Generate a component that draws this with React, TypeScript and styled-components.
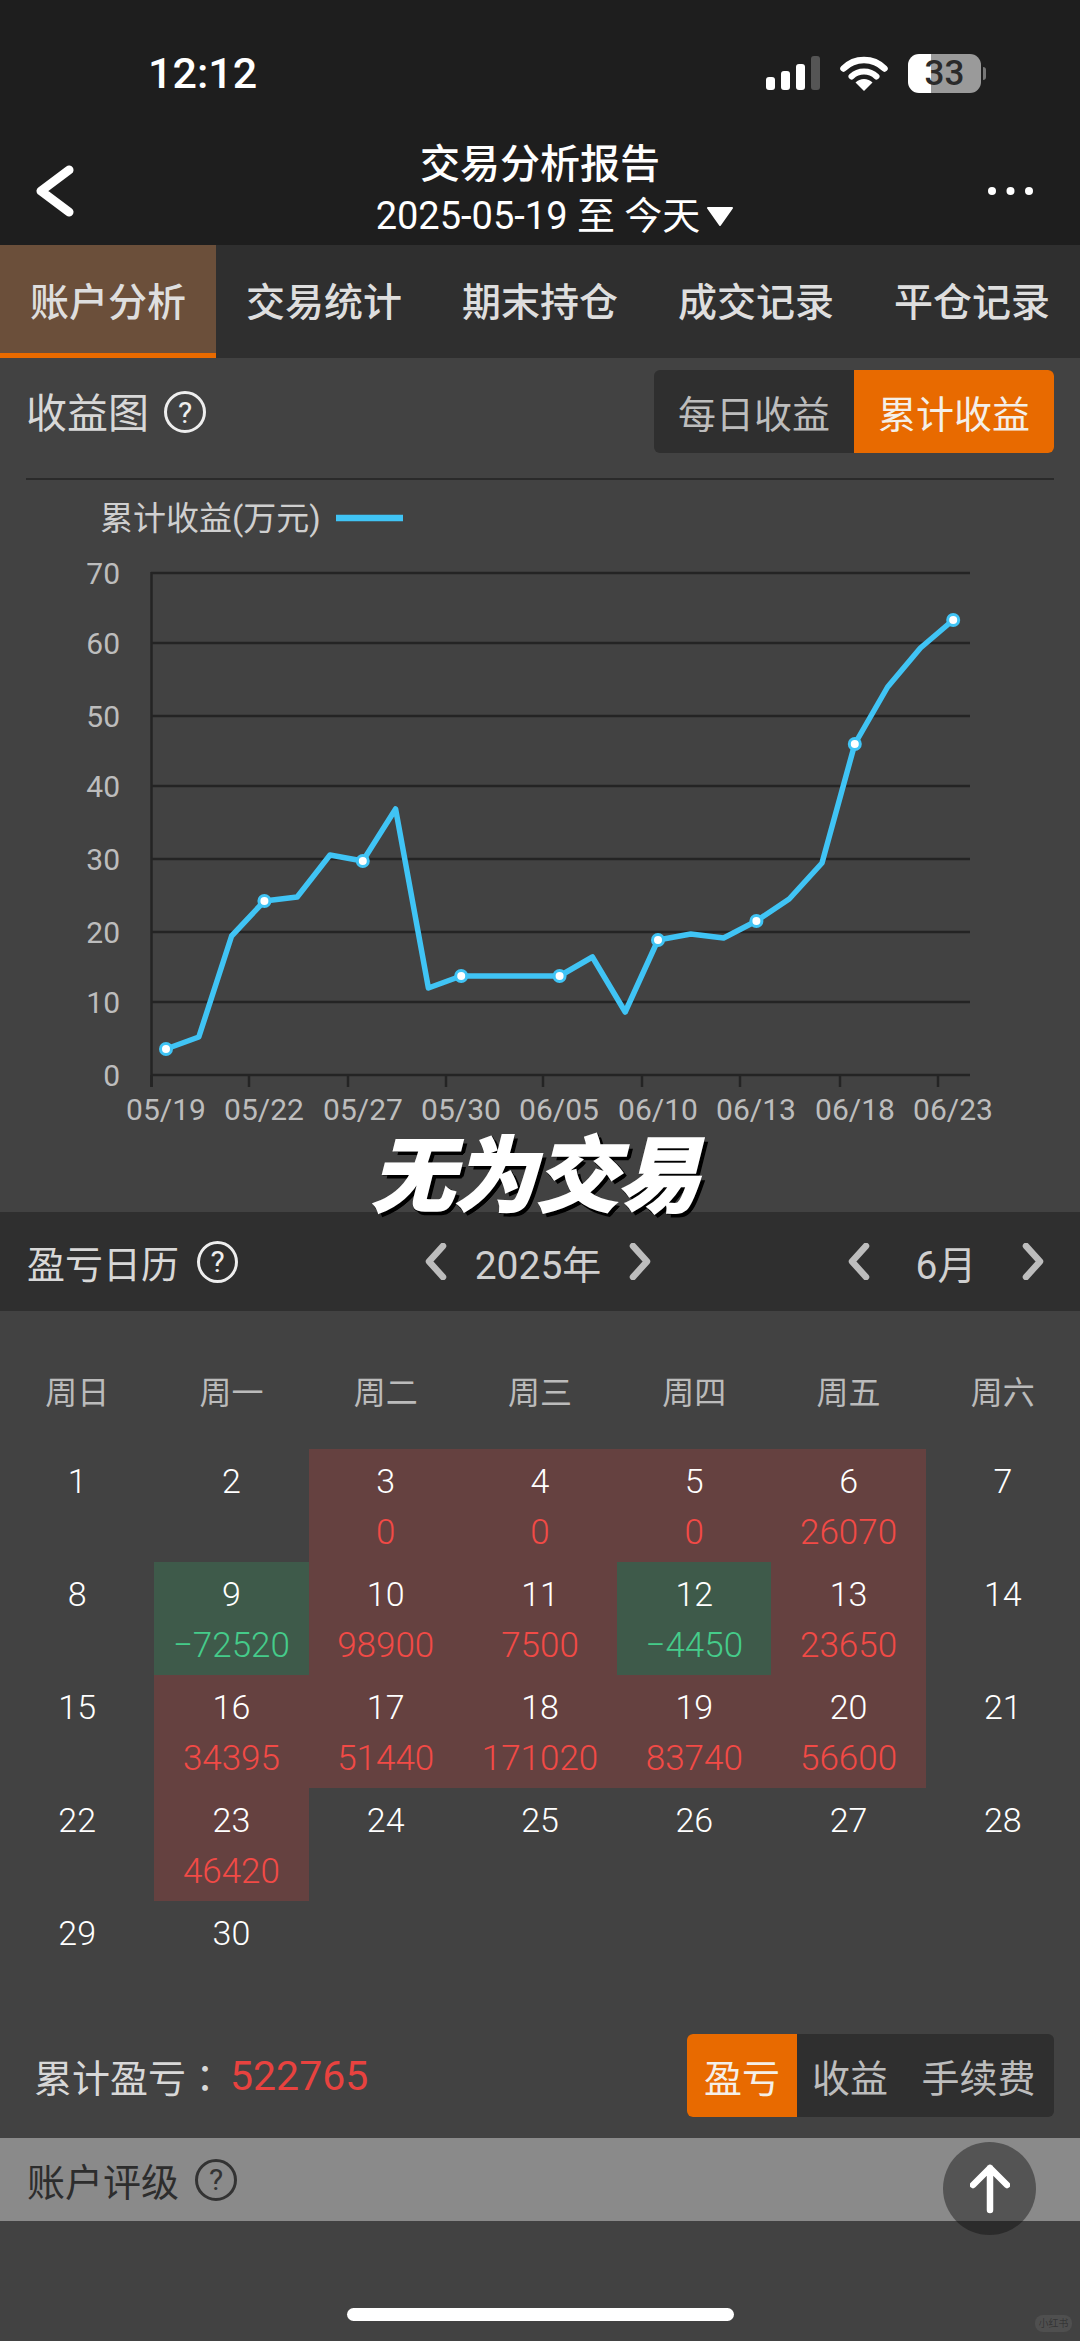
import React from "react";
import styled, { createGlobalStyle } from "styled-components";

const FONT = `Roboto, "Noto Sans CJK SC", sans-serif`;

const GlobalStyle = createGlobalStyle`
  html, body {
    margin: 0;
    padding: 0;
    background: #424242;
  }
  * {
    box-sizing: border-box;
  }
`;

const TABS = ["账户分析", "交易统计", "期末持仓", "成交记录", "平仓记录"];
const WEEKDAYS = ["周日", "周一", "周二", "周三", "周四", "周五", "周六"];

const VALUES: Record<number, number> = {
  3: 0,
  4: 0,
  5: 0,
  6: 26070,
  9: -72520,
  10: 98900,
  11: 7500,
  12: -4450,
  13: 23650,
  16: 34395,
  17: 51440,
  18: 171020,
  19: 83740,
  20: 56600,
  23: 46420,
};

const GRID_LINES = [
  { label: "70", y: 573 },
  { label: "60", y: 643 },
  { label: "50", y: 716 },
  { label: "40", y: 786 },
  { label: "30", y: 859 },
  { label: "20", y: 932 },
  { label: "10", y: 1002 },
  { label: "0", y: 1075 },
];
const X_TICKS = [151.5, 249, 348, 446, 543, 642, 740, 840, 938];
const X_LABELS = [
  { label: "05/19", x: 166 },
  { label: "05/22", x: 264 },
  { label: "05/27", x: 363 },
  { label: "05/30", x: 461 },
  { label: "06/05", x: 559 },
  { label: "06/10", x: 658 },
  { label: "06/13", x: 756 },
  { label: "06/18", x: 855 },
  { label: "06/23", x: 953 },
];
const SERIES = [
  1049, 1037, 936, 901, 897, 855, 861, 809, 988, 976, 976, 976, 976, 957, 1012,
  940, 934, 938, 921, 899, 863, 744, 687, 648, 620,
];
const POINTS = SERIES.map((y, i) => ({ x: 166 + i * 32.8, y }));

function Chart() {
  return (
    <ChartSvg viewBox="0 480 1080 732">
      <ChartText x={100} y={518} $size={33} $fill="#cfcfcf" dominantBaseline="central">
        累计收益(万元)
      </ChartText>
      <line x1={336} x2={403} y1={518} y2={518} stroke="#40c4f5" strokeWidth={6.5} />
      {GRID_LINES.map((g) => (
        <React.Fragment key={g.label}>
          <line x1={151} x2={970} y1={g.y} y2={g.y} stroke="#242424" strokeWidth={2.5} />
          <ChartText x={120} y={g.y} textAnchor="end" dominantBaseline="central">
            {g.label}
          </ChartText>
        </React.Fragment>
      ))}
      <line x1={151.5} x2={151.5} y1={572} y2={1087} stroke="#242424" strokeWidth={2.5} />
      {X_TICKS.map((x) => (
        <line key={x} x1={x} x2={x} y1={1075} y2={1087} stroke="#242424" strokeWidth={2.5} />
      ))}
      {X_LABELS.map((t) => (
        <ChartText key={t.label} x={t.x} y={1109} textAnchor="middle" dominantBaseline="central">
          {t.label}
        </ChartText>
      ))}
      <polyline
        points={POINTS.map((p) => `${p.x},${p.y}`).join(" ")}
        fill="none"
        stroke="#40c4f5"
        strokeWidth={5.5}
        strokeLinejoin="round"
      />
      {POINTS.filter((_, i) => i % 3 === 0).map((p) => (
        <circle key={p.x} cx={p.x} cy={p.y} r={5.5} fill="#fff" stroke="#40c4f5" strokeWidth={3} />
      ))}
    </ChartSvg>
  );
}

function Chevron({ right }: { right?: boolean }) {
  return (
    <svg width="24" height="37" viewBox="0 0 24 37">
      <path
        d={right ? "M5 3 L19 18.5 L5 34" : "M19 3 L5 18.5 L19 34"}
        fill="none"
        stroke="#bdbdbd"
        strokeWidth="6.5"
        strokeLinecap="round"
        strokeLinejoin="round"
      />
    </svg>
  );
}

function formatValue(v: number) {
  return v < 0 ? `−${Math.abs(v)}` : `${v}`;
}

export default function App() {
  const days = Array.from({ length: 30 }, (_, i) => i + 1);
  return (
    <Page>
      <GlobalStyle />
      <Header>
        <StatusBar>
          <Time>12:12</Time>
          <StatusIcons>
            <svg width="54" height="34" viewBox="0 0 54 34">
              <rect x="0" y="21" width="9" height="13" rx="3" fill="#fff" />
              <rect x="15" y="15" width="9" height="19" rx="3" fill="#fff" />
              <rect x="30" y="8" width="9" height="26" rx="3" fill="#fff" />
              <rect x="45" y="0" width="9" height="34" rx="3" fill="#555" />
            </svg>
            <svg width="48" height="36" viewBox="0 0 48 36">
              <path d="M3.5 13.5 A29 29 0 0 1 44.5 13.5" fill="none" stroke="#fff" strokeWidth="6.5" strokeLinecap="round" />
              <path d="M11.5 21.5 A18 18 0 0 1 36.5 21.5" fill="none" stroke="#fff" strokeWidth="6" strokeLinecap="round" />
              <path d="M24 36 L15.5 27.5 A12 12 0 0 1 32.5 27.5 Z" fill="#fff" />
            </svg>
            <Battery>33</Battery>
          </StatusIcons>
        </StatusBar>
        <NavBar>
          <BackIcon width="41" height="52" viewBox="0 0 41 52">
            <path d="M35 5 L7 26 L35 47" fill="none" stroke="#fff" strokeWidth="9" strokeLinecap="round" strokeLinejoin="round" />
          </BackIcon>
          <NavCenter>
            <NavTitle>交易分析报告</NavTitle>
            <NavDate>
              2025-05-19 至 今天
              <svg width="28" height="20" viewBox="0 0 28 20">
                <path d="M2 2 H26 L14 19 Z" fill="#fff" stroke="#fff" strokeWidth="2" strokeLinejoin="round" />
              </svg>
            </NavDate>
          </NavCenter>
          <MoreIcon width="45" height="8" viewBox="0 0 45 8">
            <circle cx="4" cy="4" r="4" fill="#fff" />
            <circle cx="22.5" cy="4" r="4" fill="#fff" />
            <circle cx="41" cy="4" r="4" fill="#fff" />
          </MoreIcon>
        </NavBar>
      </Header>

      <Tabs>
        {TABS.map((t, i) => (
          <Tab key={t} $active={i === 0}>
            {t}
          </Tab>
        ))}
      </Tabs>

      <ChartHeader>
        <TitleGroup>
          <SectionTitle>收益图</SectionTitle>
          <HelpMark $drop={4}>?</HelpMark>
        </TitleGroup>
        <Segments>
          <Segment $width={200}>每日收益</Segment>
          <Segment $width={200} $active>
            累计收益
          </Segment>
        </Segments>
      </ChartHeader>

      <ChartPanel>
        <Chart />
        <Caption>无为交易</Caption>
      </ChartPanel>

      <CalendarBar>
        <CalendarTitle>
          <SectionTitle>盈亏日历</SectionTitle>
          <HelpMark>?</HelpMark>
        </CalendarTitle>
        <YearNav>
          <Chevron />
          <NavValue>2025年</NavValue>
          <Chevron right />
        </YearNav>
        <MonthNav>
          <Chevron />
          <NavValue>6月</NavValue>
          <Chevron right />
        </MonthNav>
      </CalendarBar>

      <WeekRow>
        {WEEKDAYS.map((d) => (
          <WeekDay key={d}>{d}</WeekDay>
        ))}
      </WeekRow>

      <DayGrid>
        {days.map((d) => {
          const value = VALUES[d];
          const hasValue = value !== undefined;
          const tone = !hasValue ? "none" : value < 0 ? "loss" : "gain";
          return (
            <DayCell key={d} $tone={tone}>
              <DayNumber>{d}</DayNumber>
              {hasValue && <DayValue $tone={tone}>{formatValue(value)}</DayValue>}
            </DayCell>
          );
        })}
      </DayGrid>

      <Summary>
        <SummaryLabel>
          累计盈亏<SummaryColon>：</SummaryColon>
          <SummaryValue>522765</SummaryValue>
        </SummaryLabel>
        <Segments>
          <Segment $width={110} $active>
            盈亏
          </Segment>
          <Segment $width={106}>收益</Segment>
          <Segment $width={151}>手续费</Segment>
        </Segments>
      </Summary>

      <RatingBar>
        <RatingTitle>账户评级</RatingTitle>
        <HelpMark $dark>?</HelpMark>
      </RatingBar>

      <HomeArea>
        <HomeBar />
      </HomeArea>

      <ScrollTop>
        <svg width="40" height="50" viewBox="0 0 40 50">
          <path
            d="M20 46 V4 M3 21 L20 4 L37 21"
            fill="none"
            stroke="#fff"
            strokeWidth="6.5"
            strokeLinecap="round"
            strokeLinejoin="round"
          />
        </svg>
      </ScrollTop>
      <Watermark>小红书</Watermark>
    </Page>
  );
}

const Page = styled.div`
  position: relative;
  width: 1080px;
  height: 2341px;
  overflow: hidden;
  background: #424242;
  color: #ddd;
  font-family: ${FONT};
`;

const Header = styled.header`
  height: 245px;
  background: #1e1e1e;
  color: #fff;
`;

const StatusBar = styled.div`
  display: flex;
  align-items: center;
  height: 100px;
  margin-bottom: 40px;
  padding: 46px 99px 0 148px;
`;

const Time = styled.div`
  font-size: 43px;
  font-weight: 500;
`;

const StatusIcons = styled.div`
  display: flex;
  align-items: center;
  gap: 20px;
  margin-left: auto;
`;

const Battery = styled.div`
  position: relative;
  width: 73px;
  height: 39px;
  border-radius: 11px;
  background: linear-gradient(90deg, #fff 32%, #9a9a9a 32%);
  color: #2a2a2a;
  font-size: 35px;
  font-weight: 500;
  line-height: 39px;
  text-align: center;

  &::after {
    content: "";
    position: absolute;
    left: 75px;
    top: 13px;
    width: 3px;
    height: 13px;
    border-radius: 0 3px 3px 0;
    background: #777;
  }
`;

const NavBar = styled.div`
  display: grid;
  grid-template-columns: 1fr auto 1fr;
  align-items: center;
  padding: 0 34px;
`;

const BackIcon = styled.svg`
  display: block;
  justify-self: start;
`;

const MoreIcon = styled.svg`
  display: block;
  justify-self: end;
  margin-right: 13px;
`;

const NavCenter = styled.div`
  display: flex;
  flex-direction: column;
  align-items: center;
`;

const NavTitle = styled.div`
  font-size: 40px;
  font-weight: 500;
  line-height: 50px;
`;

const NavDate = styled.div`
  display: flex;
  align-items: center;
  gap: 6px;
  padding-left: 30px;
  font-size: 38px;
  line-height: 52px;
`;

const Tabs = styled.nav`
  display: flex;
  height: 113px;
  background: #2f2f2f;
`;

const Tab = styled.div<{ $active?: boolean }>`
  display: flex;
  align-items: center;
  justify-content: center;
  width: 216px;
  font-size: 39px;
  font-weight: 500;
  color: #dedede;
  background: ${({ $active }) => ($active ? "#6b4f3a" : "transparent")};
  border-bottom: 5px solid ${({ $active }) => ($active ? "#e86a00" : "transparent")};
`;

const ChartHeader = styled.div`
  display: flex;
  align-items: flex-start;
  justify-content: space-between;
  height: 122px;
  margin: 0 26px 0 26px;
  padding-top: 12px;
  border-bottom: 2px solid #2a2a2a;
`;

const TitleGroup = styled.div`
  display: flex;
  align-items: center;
  gap: 15px;
  height: 80px;
`;

const SectionTitle = styled.div`
  font-size: 41px;
  color: #d8d8d8;
`;

const HelpMark = styled.span<{ $dark?: boolean; $drop?: number }>`
  display: flex;
  align-items: center;
  justify-content: center;
  width: 42px;
  height: 42px;
  margin-top: ${({ $drop }) => $drop ?? 0}px;
  border: 3.5px solid ${({ $dark }) => ($dark ? "#333" : "#eee")};
  border-radius: 50%;
  color: ${({ $dark }) => ($dark ? "#333" : "#eee")};
  font-size: 30px;
`;

const Segments = styled.div`
  display: flex;
  height: 83px;
  border-radius: 6px;
  overflow: hidden;
  background: #2f2f2f;
`;

const Segment = styled.div<{ $width: number; $active?: boolean }>`
  display: flex;
  align-items: center;
  justify-content: center;
  width: ${({ $width }) => $width}px;
  font-size: 38px;
  color: ${({ $active }) => ($active ? "#f4efe8" : "#bdbdbd")};
  background: ${({ $active }) => ($active ? "#e86a00" : "transparent")};
`;

const ChartPanel = styled.section`
  position: relative;
  height: 732px;
`;

const ChartSvg = styled.svg`
  display: block;
  width: 1080px;
  height: 732px;
`;

const ChartText = styled.text<{ $size?: number; $fill?: string }>`
  font-family: ${FONT};
  font-size: ${({ $size }) => $size ?? 30}px;
  fill: ${({ $fill }) => $fill ?? "#bdbdbd"};
`;

const Caption = styled.div`
  position: absolute;
  left: -8px;
  right: 0;
  top: 650px;
  text-align: center;
  font-family: "Noto Sans CJK SC", sans-serif;
  font-size: 82px;
  font-style: italic;
  font-weight: 700;
  line-height: 80px;
  color: #fff;
  -webkit-text-stroke: 3px #fff;
  text-shadow: 4px 4px 0 #000, 5px 3px 0 #000, 3px 5px 0 #000, -1px 2px 0 #000, 2px -1px 0 #000;
`;

const CalendarBar = styled.div`
  display: flex;
  align-items: center;
  height: 99px;
  padding-left: 27px;
  background: #2f2f2f;
`;

const CalendarTitle = styled(TitleGroup)`
  gap: 18px;
  width: 211px;
  white-space: nowrap;

  ${SectionTitle} {
    font-size: 38px;
  }
`;

const YearNav = styled.div`
  display: flex;
  align-items: center;
  justify-content: space-between;
  width: 228px;
  margin-left: 186px;
`;

const MonthNav = styled.div`
  display: flex;
  align-items: center;
  justify-content: space-between;
  width: 198px;
  margin-left: 195px;
`;

const NavValue = styled.div`
  font-size: 39px;
  color: #d0d0d0;
`;

const WeekRow = styled.div`
  display: grid;
  grid-template-columns: repeat(7, 1fr);
  height: 138px;
  padding-top: 54px;
`;

const WeekDay = styled.div`
  font-size: 32px;
  line-height: 56px;
  text-align: center;
  color: #bbb;
`;

const DayGrid = styled.div`
  display: grid;
  grid-template-columns: repeat(7, 1fr);
  grid-auto-rows: 113px;
`;

const TONE_BG: Record<string, string> = {
  none: "transparent",
  gain: "#654140",
  loss: "#3e5a4a",
};

const DayCell = styled.div<{ $tone: string }>`
  padding-top: 7px;
  text-align: center;
  background: ${({ $tone }) => TONE_BG[$tone]};
`;

const DayNumber = styled.div`
  font-size: 34px;
  font-weight: 300;
  line-height: 50px;
  color: #fff;
`;

const DayValue = styled.div<{ $tone: string }>`
  margin-top: 2px;
  font-size: 35px;
  font-weight: 300;
  line-height: 50px;
  color: ${({ $tone }) => ($tone === "loss" ? "#45cc8a" : "#f24a46")};
`;

const Summary = styled.div`
  display: flex;
  align-items: center;
  justify-content: space-between;
  height: 124px;
  padding: 20px 26px 21px 34px;
`;

const SummaryLabel = styled.div`
  display: flex;
  align-items: center;
  font-size: 38px;
  color: #d8d8d8;
`;

const SummaryColon = styled.span`
  font-family: "Noto Sans CJK TC", sans-serif;
  margin-right: 6px;
`;

const SummaryValue = styled.span`
  font-size: 41px;
  color: #e8423f;
`;

const RatingBar = styled.div`
  display: flex;
  align-items: center;
  gap: 16px;
  height: 83px;
  padding-left: 27px;
  background: #8a8a8a;
`;

const RatingTitle = styled.div`
  font-size: 38px;
  color: #2d2d2d;
`;

const HomeArea = styled.div`
  display: flex;
  justify-content: center;
  padding-top: 87px;
`;

const HomeBar = styled.div`
  width: 387px;
  height: 13px;
  border-radius: 7px;
  background: #fff;
`;

const ScrollTop = styled.div`
  position: absolute;
  left: 943px;
  top: 2142px;
  display: flex;
  align-items: center;
  justify-content: center;
  width: 93px;
  height: 93px;
  border-radius: 50%;
  background: rgba(15, 15, 15, 0.43);
`;

const Watermark = styled.div`
  position: absolute;
  left: 1035px;
  top: 2315px;
  width: 37px;
  height: 17px;
  border-radius: 8px;
  background: rgba(255, 255, 255, 0.07);
  color: rgba(0, 0, 0, 0.35);
  font-size: 10px;
  line-height: 17px;
  text-align: center;
`;
